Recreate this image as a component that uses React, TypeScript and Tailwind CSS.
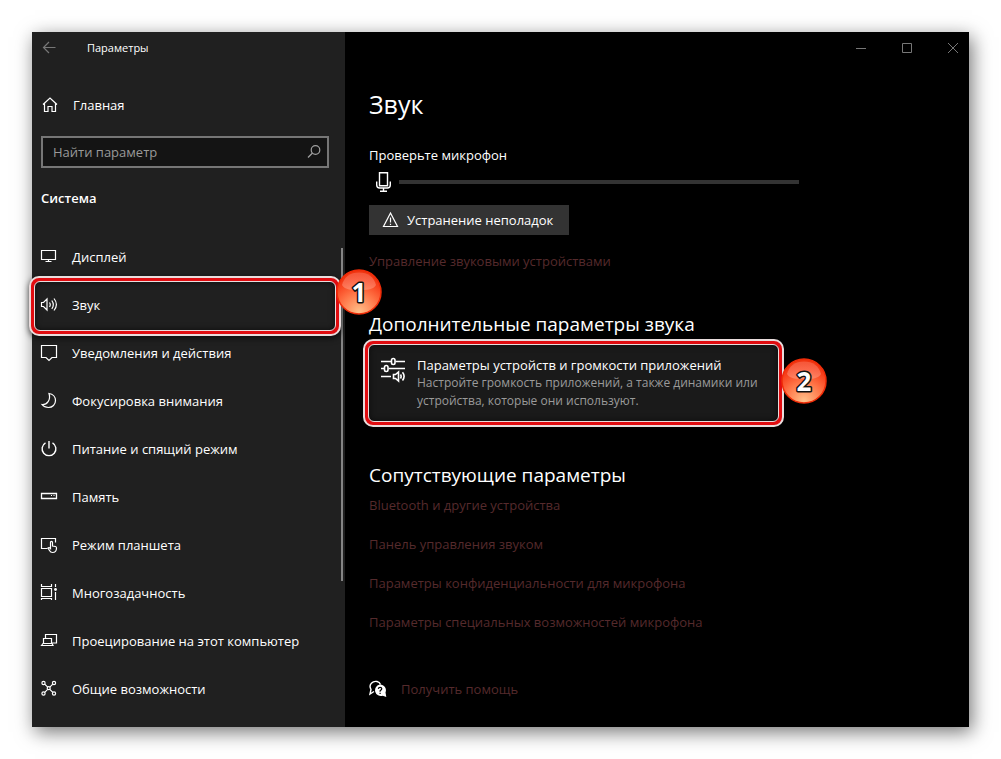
import type { ReactNode } from 'react';

function Icon({ children, size = 18 }: { children: ReactNode; size?: number }) {
  return (
    <svg
      width={size}
      height={size}
      viewBox={`0 0 ${size} ${size}`}
      fill="none"
      stroke="currentColor"
      strokeWidth="1.2"
      className="shrink-0"
      aria-hidden="true"
    >
      {children}
    </svg>
  );
}

const navItems: { label: string; icon: ReactNode; selected?: boolean }[] = [
  {
    label: 'Дисплей',
    icon: <path d="M1.5 2.5h14v9h-14zM8.5 11.5v2M5.5 13.5h6" />,
  },
  {
    label: 'Звук',
    selected: true,
    icon: (
      <path d="M1.500 6.500h2l3.500-3.500v11l-3.500-3.500h-2zM9.500 6.500q1.500 2.200 0 4.400M11.800 4.500q3 4.200 0 8.400M14 2.500q4.800 6 0 12" />
    ),
  },
  {
    label: 'Уведомления и действия',
    icon: <path d="M1.500 1.500h15v12h-4.500l-3 3-3-3h-4.500z" />,
  },
  {
    label: 'Фокусировка внимания',
    icon: (
      <path d="M9 1.500C13 2 15.500 5 15.500 8.500c0 4-3 7-7 7-2.500 0-5-1-6.500-3 5 .5 9-4.500 7-11z" />
    ),
  },
  {
    label: 'Питание и спящий режим',
    icon: <path d="M9 1v7.500M5.500 2.800A6.900 6.900 0 1 0 12.500 2.800" strokeWidth="1.400" />,
  },
  {
    label: 'Память',
    icon: (
      <>
        <path d="M1.500 5.500h15v5h-15z" strokeWidth="1.300" />
        <path d="M11 7.500h1M13.500 7.500h1" />
      </>
    ),
  },
  {
    label: 'Режим планшета',
    icon: (
      <>
        <path d="M7.500 12.500h-6v-10h14v4" />
        <path d="M10.500 12V6.500q0-1.200 1-1.200t1 1.200v3.500l3 .5q1 .2 1 1.500 0 4.500-4 4.500-2 0-3-2l-1.500-2.500q1-1 2.500.5z" />
      </>
    ),
  },
  {
    label: 'Многозадачность',
    icon: (
      <>
        <path d="M1.500 4.500h10v8h-10zM1.500 0v2.500h10V0M1.500 16v-1.500h10V16M15.500 0v3M15.500 8v8" />
        <circle cx="15.500" cy="5.500" r="1.400" fill="currentColor" stroke="none" />
      </>
    ),
  },
  {
    label: 'Проецирование на этот компьютер',
    icon: <path d="M5.500 6V2.500h11v8.500h-5M3.500 11.500v-5h8v5M1.500 13.500l1.500-2h9l1 2z" />,
  },
  {
    label: 'Общие возможности',
    icon: (
      <>
        <circle cx="3.500" cy="3" r="1.600" />
        <circle cx="14" cy="3" r="1.600" />
        <circle cx="3.500" cy="13.500" r="1.600" />
        <circle cx="14" cy="13.500" r="1.600" />
        <circle cx="8.700" cy="8.200" r="1.500" />
        <path d="M4.700 4.200l3 3M12.800 4.200l-3 3M4.700 12.300l3-3M12.800 12.300l-3-3" />
      </>
    ),
  },
];

const relatedLinks = [
  'Bluetooth и другие устройства',
  'Панель управления звуком',
  'Параметры конфиденциальности для микрофона',
  'Параметры специальных возможностей микрофона',
];

function Badge({ id, value }: { id: string; value: string }) {
  return (
    <svg width="46" height="46" viewBox="0 0 46 46" role="img" aria-label={value}>
      <defs>
        <radialGradient id={`${id}-body`} cx="0.5" cy="0.95" r="0.85">
          <stop offset="0" stopColor="#ffc08a" />
          <stop offset="0.5" stopColor="#ff7648" />
          <stop offset="0.85" stopColor="#f8401c" />
          <stop offset="1" stopColor="#f03410" />
        </radialGradient>
        <linearGradient id={`${id}-gloss`} x1="0" y1="0" x2="0" y2="1">
          <stop offset="0" stopColor="#ff8c78" stopOpacity="0.4" />
          <stop offset="1" stopColor="#ffa890" stopOpacity="0.5" />
        </linearGradient>
      </defs>
      <circle cx="23" cy="23" r="22" fill={`url(#${id}-body)`} stroke="#f02c08" strokeWidth="1.500" />
      <path
        d="M6 16C8 8 14 3.500 23 3.500s15 4.500 17 12.500c-3 5-10 5-17 5S9 21 6 16z"
        fill={`url(#${id}-gloss)`}
      />
      <text
        x="23"
        y="33"
        textAnchor="middle"
        className="font-['Open_Sans',sans-serif] text-[26px] font-bold"
        fill="#fff"
        stroke="#111"
        strokeWidth="3"
        strokeLinejoin="round"
        paintOrder="stroke"
      >
        {value}
      </text>
    </svg>
  );
}

const ring =
  'rounded-[10px] border-2 border-[#e8dcdc] bg-[#e00c10] p-[3px] shadow-[0_2px_6px_rgba(0,0,0,0.7)]';

const ringInner = 'rounded-[6px] border border-[#e8dcdc] shadow-[inset_0_0_6px_rgba(0,0,0,0.6)]';

function Sidebar() {
  return (
    <aside className="relative flex w-[313px] shrink-0 flex-col bg-[#202020] text-white">
      <div className="flex h-8 items-center pl-[9px]">
        <button type="button" aria-label="Назад" className="text-[#777777]">
          <Icon>
            <path d="M14.500 8.500H2.500M8 3L2.500 8.500 8 14" />
          </Icon>
        </button>
        <span className="ml-7 text-[11px] leading-5">Параметры</span>
      </div>

      <a href="#home" className="mt-[31px] flex h-5 items-center gap-[14px] pl-[9px]">
        <Icon>
          <path d="M2 8.500l7-6.500 7 6.500M3.500 7.500v8h3.500v-5h4v5h3.500v-8" />
        </Icon>
        <span>Главная</span>
      </a>

      <label className="mr-4 ml-[9px] mt-[21px] flex h-8 items-center border-2 border-[#767676] bg-[#141414] px-[10px]">
        <input
          type="text"
          aria-label="Найти параметр"
          placeholder="Найти параметр"
          className="min-w-0 flex-1 bg-transparent outline-none placeholder:text-[#9a9a9a]"
        />
        <span className="-mr-[6px] text-[#a0a0a0]">
          <Icon>
            <circle cx="10.500" cy="7" r="4.300" />
            <path d="M7.500 10L3 14.500" />
          </Icon>
        </span>
      </label>

      <h2 className="mt-5 pl-[9px] font-semibold">Система</h2>

      <nav className="mt-[25px] pb-[14px]">
        <ul>
          {navItems.map((item) => (
            <li key={item.label} className="relative">
              {item.selected && (
                <div
                  className={`${ring} pointer-events-none absolute -bottom-[7px] -left-[3px] -top-[5px] right-1 z-10`}
                >
                  <div className={`${ringInner} h-full bg-[#202020]`} />
                </div>
              )}
              {item.selected && (
                <div className="absolute -right-[37px] -top-3 z-30">
                  <Badge id="step1" value="1" />
                </div>
              )}
              <a
                href="#section"
                aria-current={item.selected ? 'page' : undefined}
                className="relative z-20 flex h-12 items-center gap-[14px] pl-2"
              >
                <Icon>{item.icon}</Icon>
                <span>{item.label}</span>
              </a>
            </li>
          ))}
        </ul>
      </nav>
      <div className="absolute bottom-[146px] right-[2px] top-[216px] w-[2px] bg-[#858585]" />
    </aside>
  );
}

function WindowControls() {
  return (
    <div className="flex h-8 items-center justify-end gap-[14px] text-[#777777]">
      <button type="button" aria-label="Свернуть" className="flex w-8 justify-center">
        <Icon size={10}>
          <path d="M0 5.500h10" strokeWidth="1" />
        </Icon>
      </button>
      <button type="button" aria-label="Развернуть" className="flex w-8 justify-center">
        <Icon size={10}>
          <path d="M.5.5h9v9H.5z" strokeWidth="1" />
        </Icon>
      </button>
      <button type="button" aria-label="Закрыть" className="flex w-8 justify-center">
        <Icon size={10}>
          <path d="M0 0l10 10M10 0L0 10" strokeWidth="1" />
        </Icon>
      </button>
    </div>
  );
}

export default function App() {
  return (
    <div className="min-h-screen bg-white p-8 font-['Open_Sans','Noto_Sans',sans-serif] text-[13px] leading-5">
      <div className="flex bg-black shadow-[3px_5px_18px_rgba(0,0,0,0.55)]">
        <Sidebar />
        <main className="min-w-0 flex-1 text-white">
          <WindowControls />
          <div className="px-6">
            <h1 className="mt-5 text-[25px] leading-10">Звук</h1>

            <p className="mt-[21px]">Проверьте микрофон</p>
            <div className="mt-[7px] flex h-5 items-center gap-[6px] pl-1">
              <Icon size={20}>
                <path d="M6.500.700h8v13h-8z" strokeWidth="1.400" />
                <path d="M3.700 9.500v3.500q0 3 3 3h7.600q3 0 3-3V9.500M10.500 16v3M7 19.300h7" strokeWidth="1.400" />
              </Icon>
              <div className="h-1 w-full max-w-[400px] bg-[#333333]" />
            </div>
            <button
              type="button"
              className="mt-[13px] flex h-[30px] w-[200px] items-center gap-[7px] bg-[#333333] pl-[13px]"
            >
              <Icon>
                <path d="M8.500 2L15.500 15.500h-14zM8.500 6.500v5M8.500 12.800v1.200" />
              </Icon>
              Устранение неполадок
            </button>
            <a href="#devices" className="mt-4 block text-[#552a2c]">
              Управление звуковыми устройствами
            </a>

            <h2 className="mt-[39px] text-[19px] leading-7">Дополнительные параметры звука</h2>
            <div className={`${ring} relative mt-px -ml-[6px] max-w-[421px]`}>
              <a
                href="#app-volume"
                className={`${ringInner} flex h-[78px] gap-[11px] bg-[#1a1a1a] pl-[11px] pt-[11px]`}
              >
                <svg
                  width="26"
                  height="26"
                  viewBox="0 0 26 26"
                  fill="none"
                  stroke="currentColor"
                  strokeWidth="1.600"
                  className="mt-px shrink-0"
                  aria-hidden="true"
                >
                  <path d="M1 4.500h10.500M15.500 4.500H25M1 11.500h3M8.500 11.500H25M1 19.500h10" />
                  <rect x="11.500" y="1.500" width="3.500" height="6" rx="1.700" />
                  <rect x="4.500" y="8.500" width="3.500" height="6" rx="1.700" />
                  <path d="M13.500 17.500h2l3-2.500v9l-3-2.500h-2zM20.500 17.500q1.300 2 0 4M22.500 15.300q3.200 4 0 8.200" />
                </svg>
                <span>
                  <span className="block leading-[18px]">Параметры устройств и громкости приложений</span>
                  <span className="block text-[12px] leading-[18px] text-[#9a9a9a]">
                    Настройте громкость приложений, а также динамики или устройства, которые они используют.
                  </span>
                </span>
              </a>
              <div className="absolute -right-[45px] top-[17px]">
                <Badge id="step2" value="2" />
              </div>
            </div>

            <h2 className="mt-[34px] text-[19px] leading-7">Сопутствующие параметры</h2>
            <ul className="mt-[6px] flex flex-col gap-[19px] text-[#552a2c]">
              {relatedLinks.map((label) => (
                <li key={label}>
                  <a href="#related">{label}</a>
                </li>
              ))}
            </ul>

            <div className="mt-[47px] flex items-center gap-[14px]">
              <Icon>
                <path d="M5 11.500L1 14l1-4.500C-1 4 4 .8 8 1.500c2 .4 3 1.500 3.500 3" strokeWidth="1.400" />
                <path
                  d="M11 4.500a5.800 5.800 0 0 1 5.500 8l.8 4.500-3.500-1.300A5.800 5.800 0 1 1 11 4.500z"
                  fill="currentColor"
                  stroke="none"
                />
                <path d="M9.300 8.800q.2-1.500 1.800-1.500t1.700 1.500q0 .8-1.700 2v1M11.100 12.800v1.200" stroke="#000" />
              </Icon>
              <a href="#help" className="text-[#552a2c]">
                Получить помощь
              </a>
            </div>
          </div>
        </main>
      </div>
    </div>
  );
}
